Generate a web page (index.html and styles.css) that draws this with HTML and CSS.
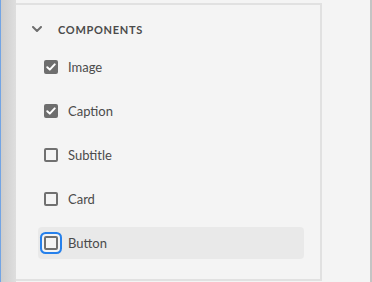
FILE: index.html
```html
<!DOCTYPE html>
<html>
<head>
<meta charset="utf-8">
<link rel="stylesheet" href="styles.css">
</head>
<body>
<div class="frame">
  <div class="strip"></div>
  <div class="panel">
    <div class="header">
      <svg class="chev" width="10" height="6" viewBox="0 0 10 6"><path d="M1 1 L5 5 L9 1" fill="none" stroke="#6e6e6e" stroke-width="2" stroke-linecap="round" stroke-linejoin="round"/></svg>
      <span class="title">COMPONENTS</span>
    </div>
    <div class="list">
      <div class="row"><span class="box checked"><svg width="10" height="8" viewBox="0 0 10 8"><path d="M1.3 4.2 L3.8 6.6 L8.7 1.4" fill="none" stroke="#fff" stroke-width="2" stroke-linecap="round" stroke-linejoin="round"/></svg></span><span class="label">Image</span></div>
      <div class="row"><span class="box checked"><svg width="10" height="8" viewBox="0 0 10 8"><path d="M1.3 4.2 L3.8 6.6 L8.7 1.4" fill="none" stroke="#fff" stroke-width="2" stroke-linecap="round" stroke-linejoin="round"/></svg></span><span class="label">Caption</span></div>
      <div class="row"><span class="box"></span><span class="label">Subtitle</span></div>
      <div class="row"><span class="box"></span><span class="label">Card</span></div>
      <div class="row hover"><span class="box focus"></span><span class="label">Button</span></div>
    </div>
  </div>
  <div class="side"></div>
</div>
</body>
</html>
```
FILE: styles.css
```css
html, body {
  margin: 0;
  padding: 0;
  background: #f4f4f4;
}
.frame {
  display: flex;
  width: 372px;
  height: 282px;
  overflow: hidden;
}
.strip {
  width: 15px;
  border-left: 1px solid #72a4e4;
  background: linear-gradient(to right, #cdcdcd, #dedede);
}
.panel {
  width: 304px;
  height: 274px;
  margin-top: 3px;
  border-top: 2px solid #e1e1e1;
  border-right: 2px solid #e1e1e1;
  border-bottom: 2px solid #e1e1e1;
  background: #f4f4f4;
  font-family: Lato, "Open Sans", sans-serif;
}
.side {
  flex: 1;
  border-right: 2px solid #c4c4c4;
}
.header {
  display: flex;
  align-items: center;
  height: 32px;
  margin-top: 8px;
  padding-left: 16px;
  gap: 16px;
}
.chev {
  display: block;
}
.title {
  font-size: 11px;
  font-weight: 700;
  letter-spacing: 0.7px;
  color: #4b4b4b;
}
.list {
  display: flex;
  flex-direction: column;
  gap: 12px;
  margin: 6px 16px 0 22px;
}
.row {
  display: flex;
  align-items: center;
  height: 32px;
  padding-left: 6px;
  gap: 10px;
  border-radius: 4px;
}
.row.hover {
  background: #e9e9e9;
}
.box {
  box-sizing: border-box;
  width: 14px;
  height: 14px;
  border: 2px solid #707070;
  border-radius: 2px;
  background: #f4f4f4;
  display: flex;
  align-items: center;
  justify-content: center;
}
.box.checked {
  background: #6e6e6e;
  border-color: #6e6e6e;
}
.box.checked svg {
  display: block;
}
.box.focus {
  box-shadow: 0 0 0 2px #f4f4f4, 0 0 0 4px #2680eb;
}
.label {
  font-size: 13px;
  color: #4b4b4b;
}
```
